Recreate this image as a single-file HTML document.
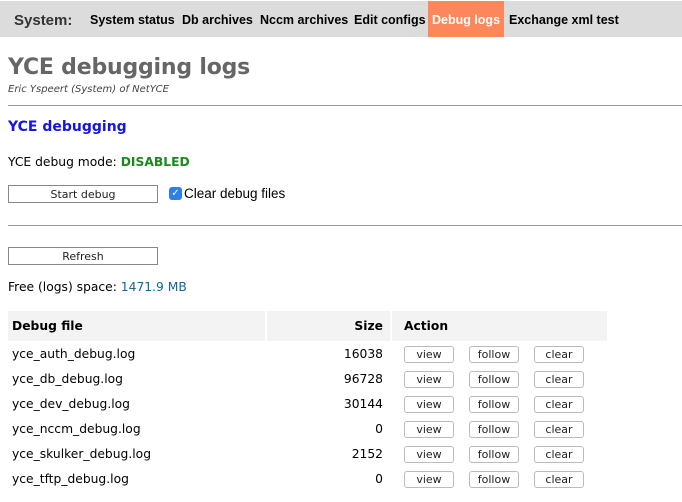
<!DOCTYPE html>
<html><head><style>
*{margin:0;padding:0;box-sizing:border-box}
body{width:682px;height:502px;background:#fff;position:relative;overflow:hidden;font-family:"DejaVu Sans",Verdana,sans-serif;font-size:12.3px;color:#000}
.a{position:absolute;white-space:nowrap}
.nav{position:absolute;left:0;top:1px;width:682px;height:36px;background:#dcdcdc}
.nv{position:absolute;top:1px;height:36px;line-height:38px;font-family:"Liberation Sans",Arial,sans-serif;font-weight:bold;font-size:12.5px;white-space:nowrap}
.hr{position:absolute;left:8px;width:674px;height:1px;background:#999}
.btn{position:absolute;left:8px;width:150px;height:18px;border:1px solid #888;background:#fff;text-align:center;font-size:11px;line-height:17px;color:#222}
.sb{position:absolute;width:50px;height:17px;border:1px solid #bbb;border-radius:3px;background:#fff;text-align:center;font-size:11px;line-height:16px;color:#222}
.th{position:absolute;top:311px;height:30px;background:#f3f3f3;font-weight:bold;font-size:12.3px;line-height:30px}
.sz{position:absolute;left:267px;width:116px;text-align:right}
</style></head><body>
<div class="nav"></div>
<div class="nv" style="left:14px;font-size:15px;color:#333;line-height:40px">System:</div>
<div class="nv" style="left:90px">System status</div>
<div class="nv" style="left:182px">Db archives</div>
<div class="nv" style="left:260px">Nccm archives</div>
<div class="nv" style="left:354px">Edit configs</div>
<div class="nv" style="left:428px;width:76px;background:#fb875a;color:#fff;text-align:center">Debug logs</div>
<div class="nv" style="left:509px">Exchange xml test</div>

<div class="a" style="left:8px;top:55px;font-size:22px;font-weight:bold;color:#666;letter-spacing:-0.2px">YCE debugging logs</div>
<div class="a" style="left:8px;top:84px;font-size:10px;font-style:italic;color:#444">Eric Yspeert (System) of NetYCE</div>
<div class="hr" style="top:105px"></div>
<div class="a" style="left:8px;top:119px;font-size:14px;font-weight:bold;color:#1414e6">YCE debugging</div>
<div class="a" style="left:8px;top:155px">YCE debug mode: <b style="color:#1a8a1a">DISABLED</b></div>
<div class="btn" style="top:185px">Start debug</div>
<div class="a" style="left:169px;top:187px;width:13px;height:13px;background:#2f7fe8;border-radius:3px;color:#fff;font-size:10px;line-height:13px;text-align:center">✓</div>
<div class="a" style="left:184px;top:186px;font-family:'Liberation Sans',Arial,sans-serif;font-size:13.5px">Clear debug files</div>
<div class="hr" style="top:225px"></div>
<div class="btn" style="top:247px">Refresh</div>
<div class="a" style="left:8px;top:280px">Free (logs) space: <span style="color:#116699">1471.9 MB</span></div>

<div class="th" style="left:8px;width:257px;padding-left:4px">Debug file</div>
<div class="th" style="left:267px;width:123px;text-align:right;padding-right:7px">Size</div>
<div class="th" style="left:392px;width:215px;padding-left:12px">Action</div>

<div class="a" style="left:12px;top:347px">yce_auth_debug.log</div><div class="a sz" style="top:347px">16038</div>
<div class="a" style="left:12px;top:372px">yce_db_debug.log</div><div class="a sz" style="top:372px">96728</div>
<div class="a" style="left:12px;top:397px">yce_dev_debug.log</div><div class="a sz" style="top:397px">30144</div>
<div class="a" style="left:12px;top:422px">yce_nccm_debug.log</div><div class="a sz" style="top:422px">0</div>
<div class="a" style="left:12px;top:447px">yce_skulker_debug.log</div><div class="a sz" style="top:447px">2152</div>
<div class="a" style="left:12px;top:472px">yce_tftp_debug.log</div><div class="a sz" style="top:472px">0</div>

<div class="sb" style="left:404px;top:346px">view</div><div class="sb" style="left:469px;top:346px">follow</div><div class="sb" style="left:534px;top:346px">clear</div>
<div class="sb" style="left:404px;top:371px">view</div><div class="sb" style="left:469px;top:371px">follow</div><div class="sb" style="left:534px;top:371px">clear</div>
<div class="sb" style="left:404px;top:396px">view</div><div class="sb" style="left:469px;top:396px">follow</div><div class="sb" style="left:534px;top:396px">clear</div>
<div class="sb" style="left:404px;top:421px">view</div><div class="sb" style="left:469px;top:421px">follow</div><div class="sb" style="left:534px;top:421px">clear</div>
<div class="sb" style="left:404px;top:446px">view</div><div class="sb" style="left:469px;top:446px">follow</div><div class="sb" style="left:534px;top:446px">clear</div>
<div class="sb" style="left:404px;top:471px">view</div><div class="sb" style="left:469px;top:471px">follow</div><div class="sb" style="left:534px;top:471px">clear</div>
</body></html>
